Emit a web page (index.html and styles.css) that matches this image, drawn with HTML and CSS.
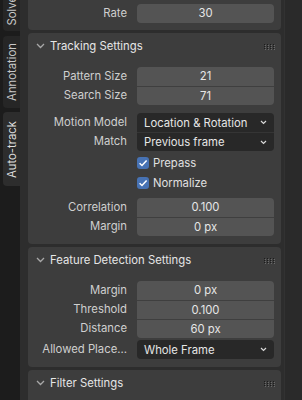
FILE: index.html
```html
<!DOCTYPE html>
<html>
<head>
<meta charset="utf-8">
<link rel="stylesheet" href="styles.css">
</head>
<body>
<div class="app">
  <nav class="tabs">
    <div class="tab tab-solve"><span>Solve</span></div>
    <div class="tab tab-annot"><span>Annotation</span></div>
    <div class="tab tab-auto active"><span>Auto-track</span></div>
  </nav>
  <main class="region">
    <section class="panel panel-cont">
      <div class="row"><span class="lbl">Rate</span><div class="num solo">30</div></div>
    </section>

    <section class="panel panel-track">
      <header class="ph">
        <svg class="chev" width="9" height="6" viewBox="0 0 9 6"><path d="M1 1 L4.5 4.5 L8 1" fill="none" stroke="#a8a8a8" stroke-width="1.3"/></svg>
        <span class="ptitle">Tracking Settings</span>
        <svg class="grip" width="11" height="6" viewBox="0 0 11 6"><g fill="#1c1c1c"><rect x="0" y="0" width="1" height="1"/><rect x="3" y="0" width="1" height="1"/><rect x="6" y="0" width="1" height="1"/><rect x="9" y="0" width="1" height="1"/><rect x="0" y="2" width="1" height="1"/><rect x="3" y="2" width="1" height="1"/><rect x="6" y="2" width="1" height="1"/><rect x="9" y="2" width="1" height="1"/><rect x="0" y="4" width="1" height="1"/><rect x="3" y="4" width="1" height="1"/><rect x="6" y="4" width="1" height="1"/><rect x="9" y="4" width="1" height="1"/></g><g fill="#6a6a6a"><rect x="1" y="1" width="1" height="1"/><rect x="4" y="1" width="1" height="1"/><rect x="7" y="1" width="1" height="1"/><rect x="10" y="1" width="1" height="1"/><rect x="1" y="3" width="1" height="1"/><rect x="4" y="3" width="1" height="1"/><rect x="7" y="3" width="1" height="1"/><rect x="10" y="3" width="1" height="1"/><rect x="1" y="5" width="1" height="1"/><rect x="4" y="5" width="1" height="1"/><rect x="7" y="5" width="1" height="1"/><rect x="10" y="5" width="1" height="1"/></g></svg>
      </header>
      <div class="pb">
        <div class="group">
          <div class="row"><span class="lbl">Pattern Size</span><div class="num">21</div></div>
          <div class="row"><span class="lbl">Search Size</span><div class="num">71</div></div>
        </div>
        <div class="group g-menu">
          <div class="row"><span class="lbl">Motion Model</span><div class="menu"><span>Location &amp; Rotation</span><svg width="7" height="5" viewBox="0 0 7 5"><path d="M1 1 L3.5 3.5 L6 1" fill="none" stroke="#d8d8d8" stroke-width="1.2"/></svg></div></div>
          <div class="row"><span class="lbl">Match</span><div class="menu"><span>Previous frame</span><svg width="7" height="5" viewBox="0 0 7 5"><path d="M1 1 L3.5 3.5 L6 1" fill="none" stroke="#d8d8d8" stroke-width="1.2"/></svg></div></div>
        </div>
        <div class="checks">
          <div class="crow"><span class="box"><svg width="12" height="12" viewBox="0 0 12 12"><path d="M2.6 6.2 L5 8.5 L9.6 3.4" fill="none" stroke="#ffffff" stroke-width="1.5"/></svg></span><span>Prepass</span></div>
          <div class="crow"><span class="box"><svg width="12" height="12" viewBox="0 0 12 12"><path d="M2.6 6.2 L5 8.5 L9.6 3.4" fill="none" stroke="#ffffff" stroke-width="1.5"/></svg></span><span>Normalize</span></div>
        </div>
        <div class="group">
          <div class="row"><span class="lbl">Correlation</span><div class="num">0.100</div></div>
          <div class="row"><span class="lbl">Margin</span><div class="num">0 px</div></div>
        </div>
      </div>
    </section>

    <section class="panel panel-feat">
      <header class="ph">
        <svg class="chev" width="9" height="6" viewBox="0 0 9 6"><path d="M1 1 L4.5 4.5 L8 1" fill="none" stroke="#a8a8a8" stroke-width="1.3"/></svg>
        <span class="ptitle">Feature Detection Settings</span>
        <svg class="grip" width="11" height="6" viewBox="0 0 11 6"><g fill="#1c1c1c"><rect x="0" y="0" width="1" height="1"/><rect x="3" y="0" width="1" height="1"/><rect x="6" y="0" width="1" height="1"/><rect x="9" y="0" width="1" height="1"/><rect x="0" y="2" width="1" height="1"/><rect x="3" y="2" width="1" height="1"/><rect x="6" y="2" width="1" height="1"/><rect x="9" y="2" width="1" height="1"/><rect x="0" y="4" width="1" height="1"/><rect x="3" y="4" width="1" height="1"/><rect x="6" y="4" width="1" height="1"/><rect x="9" y="4" width="1" height="1"/></g><g fill="#6a6a6a"><rect x="1" y="1" width="1" height="1"/><rect x="4" y="1" width="1" height="1"/><rect x="7" y="1" width="1" height="1"/><rect x="10" y="1" width="1" height="1"/><rect x="1" y="3" width="1" height="1"/><rect x="4" y="3" width="1" height="1"/><rect x="7" y="3" width="1" height="1"/><rect x="10" y="3" width="1" height="1"/><rect x="1" y="5" width="1" height="1"/><rect x="4" y="5" width="1" height="1"/><rect x="7" y="5" width="1" height="1"/><rect x="10" y="5" width="1" height="1"/></g></svg>
      </header>
      <div class="pb">
        <div class="group">
          <div class="row"><span class="lbl">Margin</span><div class="num">0 px</div></div>
          <div class="row"><span class="lbl">Threshold</span><div class="num">0.100</div></div>
          <div class="row"><span class="lbl">Distance</span><div class="num">60 px</div></div>
        </div>
        <div class="group g-solo">
          <div class="row"><span class="lbl">Allowed Place...</span><div class="menu"><span>Whole Frame</span><svg width="7" height="5" viewBox="0 0 7 5"><path d="M1 1 L3.5 3.5 L6 1" fill="none" stroke="#d8d8d8" stroke-width="1.2"/></svg></div></div>
        </div>
      </div>
    </section>

    <section class="panel panel-filter">
      <header class="ph">
        <svg class="chev" width="9" height="6" viewBox="0 0 9 6"><path d="M1 1 L4.5 4.5 L8 1" fill="none" stroke="#a8a8a8" stroke-width="1.3"/></svg>
        <span class="ptitle">Filter Settings</span>
        <svg class="grip" width="11" height="6" viewBox="0 0 11 6"><g fill="#1c1c1c"><rect x="0" y="0" width="1" height="1"/><rect x="3" y="0" width="1" height="1"/><rect x="6" y="0" width="1" height="1"/><rect x="9" y="0" width="1" height="1"/><rect x="0" y="2" width="1" height="1"/><rect x="3" y="2" width="1" height="1"/><rect x="6" y="2" width="1" height="1"/><rect x="9" y="2" width="1" height="1"/><rect x="0" y="4" width="1" height="1"/><rect x="3" y="4" width="1" height="1"/><rect x="6" y="4" width="1" height="1"/><rect x="9" y="4" width="1" height="1"/></g><g fill="#6a6a6a"><rect x="1" y="1" width="1" height="1"/><rect x="4" y="1" width="1" height="1"/><rect x="7" y="1" width="1" height="1"/><rect x="10" y="1" width="1" height="1"/><rect x="1" y="3" width="1" height="1"/><rect x="4" y="3" width="1" height="1"/><rect x="7" y="3" width="1" height="1"/><rect x="10" y="3" width="1" height="1"/><rect x="1" y="5" width="1" height="1"/><rect x="4" y="5" width="1" height="1"/><rect x="7" y="5" width="1" height="1"/><rect x="10" y="5" width="1" height="1"/></g></svg>
      </header>
    </section>
  </main>
  <aside class="side"></aside>
</div>
</body>
</html>
```
FILE: styles.css
```css
* { box-sizing: border-box; }
html, body { margin: 0; padding: 0; }
body {
  width: 302px;
  height: 400px;
  overflow: hidden;
  background: #2d2d2d;
  font-family: "Inter", "DejaVu Sans", sans-serif;
  font-size: 11.3px;
  color: #dcdcdc;
}
.app {
  display: flex;
  width: 302px;
  height: 400px;
}
.tabs {
  width: 20px;
  flex: none;
  background: #1c1c1c;
  display: flex;
  flex-direction: column;
  padding-left: 3px;
}
.tab {
  background: #262626;
  border-radius: 4px 0 0 4px;
  display: flex;
  align-items: center;
  justify-content: center;
  color: #c8c8c8;
  font-size: 11.3px;
  overflow: hidden;
}
.tab span {
  writing-mode: vertical-rl;
  transform: rotate(180deg);
  white-space: nowrap;
}
.tab-solve {
  height: 31px;
  justify-content: flex-end;
  flex-direction: column;
  padding-bottom: 5px;
  border-radius: 0 0 0 4px;
}
.tab-annot {
  height: 72px;
  margin-top: 5px;
}
.tab-auto {
  height: 74px;
  margin-top: 4px;
}
.tab.active {
  background: #2d2d2d;
  color: #dedede;
}
.region {
  width: 264px;
  flex: none;
  background: #2d2d2d;
  padding: 0 3px 0 8px;
  display: flex;
  flex-direction: column;
  gap: 3px;
}
.side {
  flex: 1;
  background: #2a2a2a;
  border-left: 1px solid #323232;
}
.panel {
  background: #3d3d3d;
  border-radius: 4px;
  flex: none;
}
.panel-cont {
  border-radius: 0 0 4px 4px;
  padding: 4px 0 7px;
}
.ph {
  height: 26px;
  display: flex;
  align-items: center;
  padding-left: 8px;
  color: #e6e6e6;
}
.chev {
  display: block;
  margin-right: 5px;
}
.ptitle {
  flex: 1;
  white-space: nowrap;
}
.grip {
  display: block;
  margin-right: 6px;
  margin-top: 1px;
}
.pb {
  padding: 8px 0 8px;
  display: flex;
  flex-direction: column;
}
.row {
  display: grid;
  grid-template-columns: 99px 137px;
  column-gap: 10px;
  height: 19px;
  align-items: stretch;
}
.lbl {
  text-align: right;
  color: #cfcfcf;
  white-space: nowrap;
  line-height: 19px;
}
.num {
  background: #545454;
  color: #e6e6e6;
  text-align: center;
  line-height: 19px;
}
.num.solo { border-radius: 4px; }
.group .row + .row .num,
.group .row + .row .menu {
  border-top: 1px solid #3f3f3f;
  line-height: 18px;
}
.group .row:first-child .num,
.group .row:first-child .menu { border-radius: 4px 4px 0 0; }
.group .row:last-child .num,
.group .row:last-child .menu { border-radius: 0 0 4px 4px; }
.group .row:only-child .menu { border-radius: 4px; }
.menu {
  background: #282828;
  color: #e6e6e6;
  display: flex;
  align-items: center;
  justify-content: space-between;
  padding: 0 7px 0 7px;
  white-space: nowrap;
}
.menu svg { display: block; }
.g-menu { margin-top: 8px; }
.group .row + .row .menu { border-top-color: #353535; }
.checks {
  margin-top: 2px;
  display: flex;
  flex-direction: column;
}
.crow {
  height: 20px;
  display: flex;
  align-items: center;
  padding-left: 109px;
  color: #e0e0e0;
}
.box {
  width: 12px;
  height: 12px;
  background: #4772b3;
  border-radius: 3px;
  margin-right: 4px;
  display: block;
}
.box svg { display: block; }
.checks + .group { margin-top: 5px; }
.g-solo { margin-top: 2px; }
.panel-feat .pb { padding-bottom: 8px; }
.panel-filter { height: 40px; border-radius: 4px 4px 0 0; }
```
